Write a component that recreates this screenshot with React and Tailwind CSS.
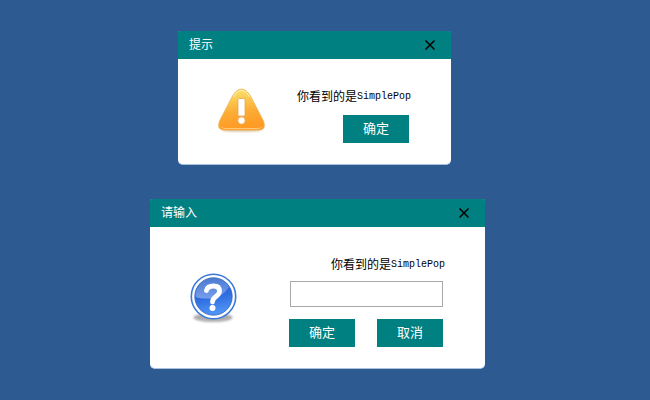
import React from "react";

function WarningIcon() {
  return (
    <svg className="h-12 w-12 shrink-0" viewBox="0 0 48 48" aria-hidden="true">
      <defs>
        <linearGradient id="warn-fill" x1="0" y1="0" x2="0.15" y2="1">
          <stop offset="0" stopColor="#f9e47a" />
          <stop offset="0.3" stopColor="#fccb52" />
          <stop offset="0.6" stopColor="#fbac36" />
          <stop offset="1" stopColor="#ff9a24" />
        </linearGradient>
        <filter id="warn-blur" x="-20%" y="-50%" width="140%" height="200%">
          <feGaussianBlur stdDeviation="0.8" />
        </filter>
      </defs>
      <ellipse cx="23.500" cy="42" rx="20" ry="1.600" fill="#b98a4a" opacity="0.6" filter="url(#warn-blur)" />
      <path
        d="M17.500 4Q23.500 -2 29.500 4Q31.500 6 33 9L45.500 33Q48.500 41.500 41.500 42H5.500Q-1.500 41.500 1.500 33L14 9Q15.500 6 17.500 4Z"
        fill="url(#warn-fill)"
        stroke="#f0b455"
        strokeWidth="0.8"
      />
      <path d="M15.500 9Q19 2.500 23.500 2.500T31.500 9" fill="none" stroke="#fdf3b0" strokeWidth="1" />
      <path d="M3 38.500Q4 40.500 7 40.500H40Q43 40.500 44 38.500" fill="none" stroke="#ffc675" strokeWidth="1" />
      <rect x="20" y="10.500" width="7" height="17.500" rx="1" fill="#fff" stroke="#e5a045" strokeWidth="0.700" />
      <circle cx="23.500" cy="32.500" r="3.700" fill="#fff" stroke="#ee9a38" strokeWidth="0.700" />
    </svg>
  );
}

function QuestionIcon() {
  return (
    <svg className="h-12 w-12 shrink-0 overflow-visible" viewBox="0 0 48 48" aria-hidden="true">
      <defs>
        <linearGradient id="ask-fill" x1="0" y1="0" x2="0.2" y2="1">
          <stop offset="0" stopColor="#2d62c4" />
          <stop offset="0.55" stopColor="#2c6ade" />
          <stop offset="1" stopColor="#4f92f5" />
        </linearGradient>
        <linearGradient id="ask-gloss" x1="0" y1="0" x2="0" y2="1">
          <stop offset="0" stopColor="#fff" stopOpacity="0.15" />
          <stop offset="1" stopColor="#fff" stopOpacity="0.35" />
        </linearGradient>
        <filter id="ask-blur" x="-20%" y="-50%" width="140%" height="200%">
          <feGaussianBlur stdDeviation="1.2" />
        </filter>
      </defs>
      <ellipse cx="23" cy="43.500" rx="19.500" ry="4.500" fill="#777" opacity="0.6" filter="url(#ask-blur)" />
      <circle cx="23.500" cy="22.500" r="22.200" fill="#fff" stroke="#3a78dc" strokeWidth="1.600" />
      <circle cx="23.500" cy="22.500" r="18.700" fill="url(#ask-fill)" stroke="#2d5fb8" strokeWidth="0.800" />
      <path d="M5.500 22.500A18 18 0 0 1 39 13Q32 24 20 24.500T5.500 22.500Z" fill="url(#ask-gloss)" />
      <path
        d="M16.500 16.500Q17.500 12 23.500 12Q29.500 12 29.500 17Q29.500 20 26 22.500Q22.500 25 22.500 28"
        fill="none"
        stroke="#fff"
        strokeWidth="4.800"
        strokeLinecap="round"
      />
      <circle cx="22.500" cy="34" r="3" fill="#fff" />
    </svg>
  );
}

function Dialog({ title, icon, width, children }) {
  return (
    <section role="dialog" aria-label={title} className={`${width} rounded-t-[3px] rounded-b-[5px] border-b border-[#a9c3dd] bg-white`}>
      <header className="flex h-7 items-center justify-between rounded-t-[2px] bg-[#008080] pr-3.5 pl-[11px]">
        <h2 className="text-[12px] leading-[18px] text-white">{title}</h2>
        <button type="button" aria-label="关闭" className="flex h-3.5 w-3.5 items-center justify-center">
          <svg className="h-2.5 w-2.5" viewBox="0 0 10 10" aria-hidden="true">
            <path d="M0.500 0.500L9.500 9.500M9.500 0.500L0.500 9.500" stroke="#000" strokeWidth="1.500" />
          </svg>
        </button>
      </header>
      <div className="flex items-center justify-between px-10 pt-[22px] pb-[21px]">
        {icon}
        <div className="flex flex-col items-end pt-[7px]">{children}</div>
      </div>
    </section>
  );
}

function Message({ id }) {
  return (
    <p id={id} className="flex items-center text-[12px] leading-[18px] text-black">
      你看到的是
      <span className="font-['Liberation_Mono','Noto_Sans_CJK_SC',monospace] text-[10px]">SimplePop</span>
    </p>
  );
}

function ActionButton({ children }) {
  return (
    <button type="button" className="h-7 w-[66px] bg-[#008080] text-[13px] leading-[18px] text-white">
      {children}
    </button>
  );
}

export default function App() {
  return (
    <main className="flex min-h-screen flex-col gap-[34px] bg-[#2e5a92] pt-[31px] pb-[31px] font-['Liberation_Sans','Noto_Sans_CJK_SC',sans-serif]">
      <div className="flex justify-center pr-[21px]">
        <Dialog title="提示" icon={<WarningIcon />} width="w-[273px]">
          <Message />
          <div className="flex pt-[9px] pr-0.5">
            <ActionButton>确定</ActionButton>
          </div>
        </Dialog>
      </div>
      <div className="flex justify-center pr-[15px]">
        <Dialog title="请输入" icon={<QuestionIcon />} width="w-[335px]">
          <Message id="prompt-message" />
          <div className="flex flex-col items-end gap-3 pt-[7px] pr-0.5">
            <input type="text" aria-labelledby="prompt-message" className="h-[26px] w-[153px] border border-[#a9a9a9] bg-white px-1 text-[12px]" />
            <div className="flex gap-[22px]">
              <ActionButton>确定</ActionButton>
              <ActionButton>取消</ActionButton>
            </div>
          </div>
        </Dialog>
      </div>
    </main>
  );
}
